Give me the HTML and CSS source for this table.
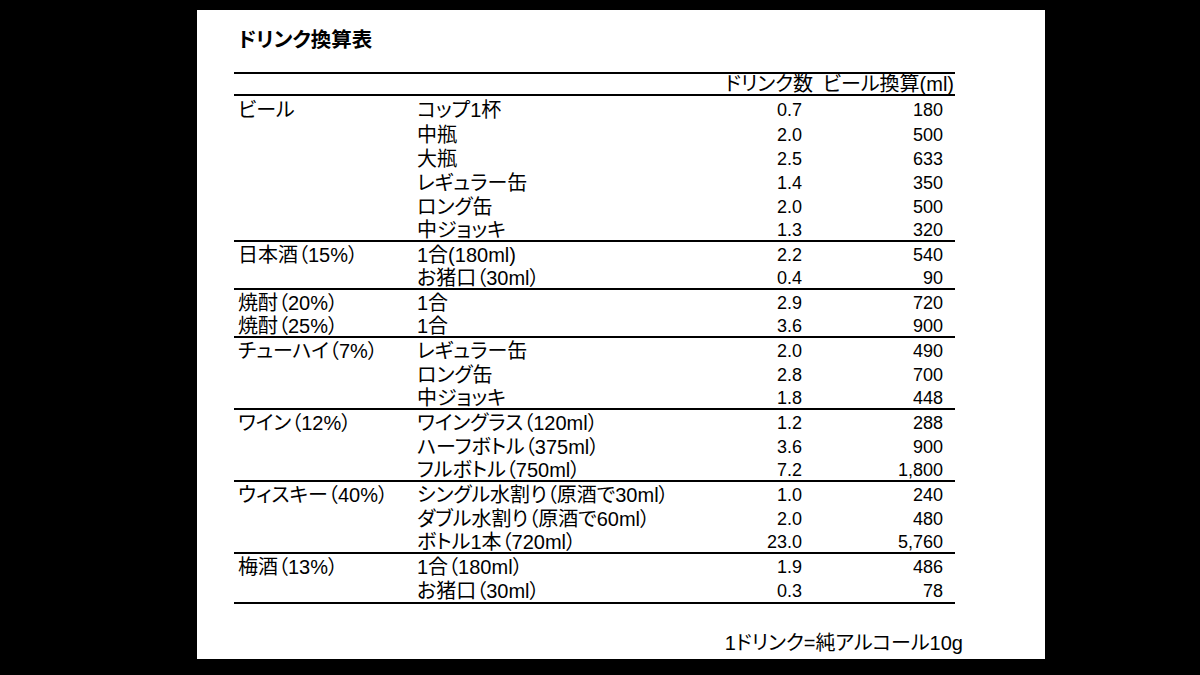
FILE: index.html
```html
<!DOCTYPE html>
<html lang="ja">
<head>
<meta charset="utf-8">
<title>ドリンク換算表</title>
<link rel="stylesheet" href="styles.css">
</head>
<body>
<div class="page">
  <h1 class="title">ドリンク換算表</h1>
  <table class="drinks">
    <colgroup>
      <col class="c-kind"><col class="c-size"><col class="c-drink"><col class="c-beer">
    </colgroup>
    <thead>
      <tr><th></th><th></th><th class="num">ドリンク数</th><th class="num">ビール換算(ml)</th></tr>
    </thead>
    <tbody>
      <tr class="first"><td>ビール</td><td>コップ1杯</td><td class="num">0.7</td><td class="num">180</td></tr>
      <tr><td></td><td>中瓶</td><td class="num">2.0</td><td class="num">500</td></tr>
      <tr><td></td><td>大瓶</td><td class="num">2.5</td><td class="num">633</td></tr>
      <tr><td></td><td>レギュラー缶</td><td class="num">1.4</td><td class="num">350</td></tr>
      <tr><td></td><td>ロング缶</td><td class="num">2.0</td><td class="num">500</td></tr>
      <tr class="end"><td></td><td>中ジョッキ</td><td class="num">1.3</td><td class="num">320</td></tr>

      <tr><td>日本酒（15%）</td><td>1合(180ml)</td><td class="num">2.2</td><td class="num">540</td></tr>
      <tr class="end"><td></td><td>お猪口（30ml）</td><td class="num">0.4</td><td class="num">90</td></tr>

      <tr><td>焼酎（20%）</td><td>1合</td><td class="num">2.9</td><td class="num">720</td></tr>
      <tr class="end"><td>焼酎（25%）</td><td>1合</td><td class="num">3.6</td><td class="num">900</td></tr>

      <tr><td>チューハイ（7%）</td><td>レギュラー缶</td><td class="num">2.0</td><td class="num">490</td></tr>
      <tr><td></td><td>ロング缶</td><td class="num">2.8</td><td class="num">700</td></tr>
      <tr class="end"><td></td><td>中ジョッキ</td><td class="num">1.8</td><td class="num">448</td></tr>

      <tr><td>ワイン（12%）</td><td>ワイングラス（120ml）</td><td class="num">1.2</td><td class="num">288</td></tr>
      <tr><td></td><td>ハーフボトル（375ml）</td><td class="num">3.6</td><td class="num">900</td></tr>
      <tr class="end"><td></td><td>フルボトル（750ml）</td><td class="num">7.2</td><td class="num">1,800</td></tr>

      <tr><td>ウィスキー（40%）</td><td>シングル水割り（原酒で30ml）</td><td class="num">1.0</td><td class="num">240</td></tr>
      <tr><td></td><td>ダブル水割り（原酒で60ml）</td><td class="num">2.0</td><td class="num">480</td></tr>
      <tr class="end"><td></td><td>ボトル1本（720ml）</td><td class="num">23.0</td><td class="num">5,760</td></tr>

      <tr><td>梅酒（13%）</td><td>1合（180ml）</td><td class="num">1.9</td><td class="num">486</td></tr>
      <tr class="end last"><td></td><td>お猪口（30ml）</td><td class="num">0.3</td><td class="num">78</td></tr>
    </tbody>
  </table>
  <p class="note">1ドリンク=純アルコール10g</p>
</div>
</body>
</html>
```

FILE: styles.css
```css
html, body {
  margin: 0;
  padding: 0;
  background: #000;
}

body {
  width: 1200px;
  height: 675px;
  overflow: hidden;
}

.page {
  box-sizing: border-box;
  margin: 10px 0 0 197px;
  width: 848px;
  height: 649px;
  background: #fff;
  padding: 18px 0 0 37px;
  color: #000;
  font-family: "Liberation Sans", "Noto Sans CJK JP", sans-serif;
  font-feature-settings: "palt";
}

.title {
  margin: 0 0 20px 4px;
  font-size: 20.5px;
  line-height: 24px;
  font-weight: bold;
}

.drinks {
  border-collapse: separate;
  border-spacing: 0;
  table-layout: fixed;
  width: 721px;
  font-size: 20px;
  border-top: 2px solid #000;
}

.c-kind { width: 179px; }
.c-size { width: 301px; }
.c-drink { width: 100px; }
.c-beer { width: 141px; }

.drinks th {
  font-weight: normal;
  height: 20px;
  line-height: 20px;
  padding: 0 1px 0 0;
  vertical-align: bottom;
  white-space: nowrap;
  border-bottom: 2px solid #000;
}

.drinks td {
  height: 22px;
  line-height: 22px;
  padding: 2px 0 0 4px;
  white-space: nowrap;
  vertical-align: middle;
}

.drinks td.num {
  font-size: 18px;
  text-align: right;
  padding: 2px 12px 0 0;
}

.drinks th.num {
  text-align: right;
}

.drinks tr.first td {
  height: 24px;
  line-height: 24px;
}

.drinks tr.end td {
  height: 20px;
  line-height: 20px;
  border-bottom: 2px solid #000;
}

.drinks tr.last td {
  height: 22px;
  line-height: 22px;
}

.note {
  width: 729px;
  margin: 27px 0 0 0;
  text-align: right;
  font-size: 20px;
  line-height: 24px;
}
```
